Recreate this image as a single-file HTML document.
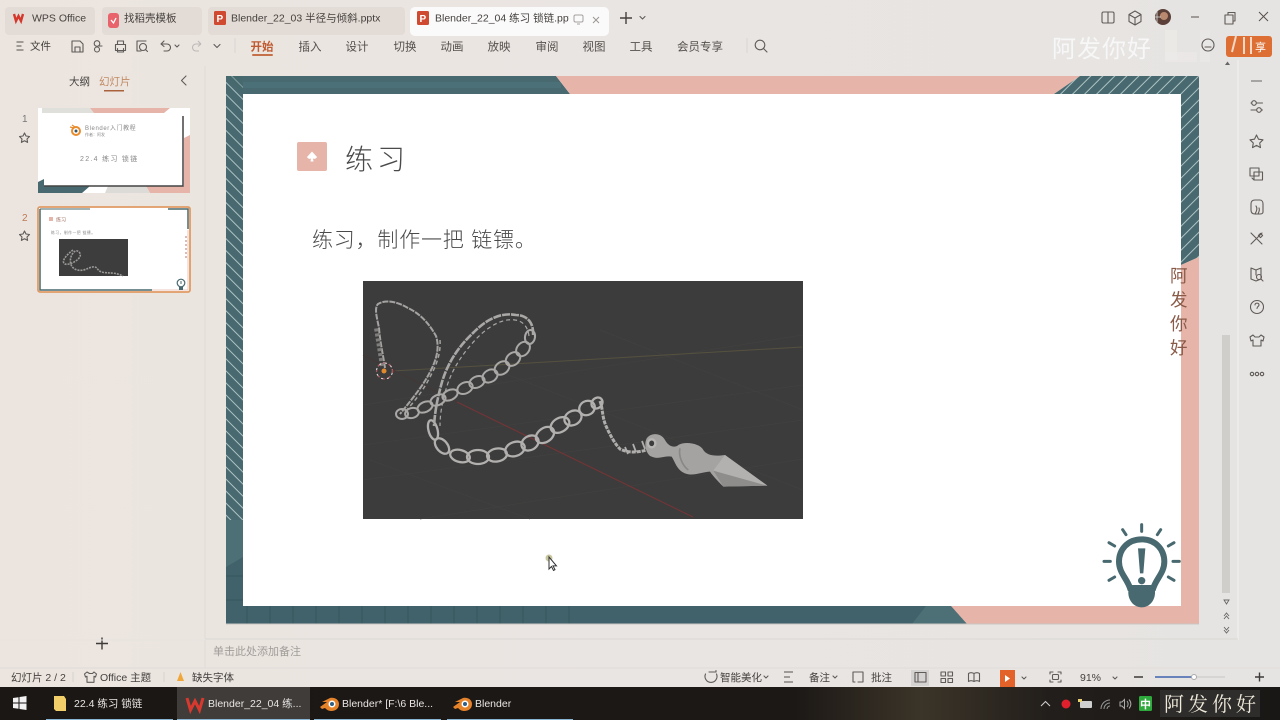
<!DOCTYPE html>
<html><head><meta charset="utf-8">
<style>
html,body{margin:0;padding:0;background:#e8e5e2;width:1280px;height:720px;overflow:hidden}
svg{display:block}
text{font-family:"Liberation Sans","Noto Sans CJK SC",sans-serif;fill:#45413e;font-size:11px}
.m{font-size:11.5px;text-anchor:middle;fill:#55504c}
.i{fill:none;stroke:#5f5b58;stroke-width:1.1;stroke-linecap:round;stroke-linejoin:round}
.t{font-size:10.5px;fill:#e8e6e4}
</style></head><body>
<svg width="1280" height="720" viewBox="0 0 1280 720" xmlns="http://www.w3.org/2000/svg">
<defs>
<linearGradient id="bg" x1="0" x2="1" y1="0" y2="0"><stop offset="0" stop-color="#ece5df"/><stop offset=".5" stop-color="#e9e5e2"/><stop offset="1" stop-color="#e6e4e2"/></linearGradient>
<pattern id="hl" width="8.500" height="8.500" patternUnits="userSpaceOnUse" patternTransform="rotate(45)"><rect width="9" height="9" fill="#47696f"/><rect width="9" height="1" fill="#aec3c4"/></pattern>
<pattern id="hr" width="8.500" height="8.500" patternUnits="userSpaceOnUse" patternTransform="rotate(-45)"><rect width="9" height="9" fill="#47696f"/><rect width="9" height="1" fill="#aec3c4"/></pattern>
<linearGradient id="tb" x1="0" x2="1" y1="0" y2="0"><stop offset="0" stop-color="#1b1715"/><stop offset=".62" stop-color="#1c1816"/><stop offset=".72" stop-color="#3b3428"/><stop offset=".82" stop-color="#221e1b"/><stop offset="1" stop-color="#191715"/></linearGradient>
</defs>
<rect width="1280" height="720" fill="url(#bg)"/>

<!-- tabs -->
<rect x="5" y="7" width="90" height="28" rx="4" fill="#e3dbd5"/>
<rect x="102" y="7" width="100" height="28" rx="4" fill="#e3dbd5"/>
<rect x="208" y="7" width="197" height="28" rx="4" fill="#e3dbd5"/>
<rect x="410" y="7" width="199" height="29" rx="5" fill="#fbfafa"/>
<path d="M14 14l2 7 2.500-5 2.500 5 2-7" fill="none" stroke="#d5372d" stroke-width="2.400"/>
<text x="32" y="21.500" style="font-size:10.500px">WPS Office</text>
<rect x="108" y="13" width="11" height="15" rx="3" fill="#e8636c"/><path d="M111 20l2.500 3 2.500-5" fill="none" stroke="#fff" stroke-width="1.300"/>
<text x="124" y="21.500" style="font-size:10.500px">找稻壳模板</text>
<rect x="214" y="11" width="12" height="14" rx="1.500" fill="#cf4a30"/><text x="216.500" y="22" style="font-size:10px;font-weight:bold;fill:#fff">P</text>
<text x="231" y="21.500" style="font-size:10.500px">Blender_22_03 半径与倾斜.pptx</text>
<rect x="417" y="11" width="12" height="14" rx="1.500" fill="#cf4a30"/><text x="419.500" y="22" style="font-size:10px;font-weight:bold;fill:#fff">P</text>
<text x="435" y="21.500" style="font-size:10.500px">Blender_22_04 练习 锁链.ppt</text>
<rect x="569" y="8" width="30" height="27" fill="#fbfafa"/>
<rect x="574" y="15" width="9" height="7" rx="1.500" fill="none" stroke="#a5a19f"/><path d="M577 24h3" stroke="#a5a19f"/>
<path d="M593 17l6 6m0-6l-6 6" stroke="#9a9694" stroke-width="1"/>
<path d="M620 18h12M626 12v12" stroke="#45403d" stroke-width="1.400"/>
<path d="M640 16.500l2.500 2.500 2.500-2.500" class="i"/>

<!-- window controls -->
<g class="i"><rect x="1102" y="12" width="12" height="11" rx="1.500"/><path d="M1108 12v11"/>
<path d="M1135 11l6 3.500v7l-6 3.500-6-3.500v-7zM1129 14.500l6 3.500 6-3.500M1135 18v7"/></g>
<circle cx="1163" cy="17" r="8" fill="#5a4038"/><circle cx="1164" cy="16" r="4" fill="#b98a70"/><path d="M1157 11v12M1154 17h7" stroke="#ddd" stroke-width=".8"/>
<path d="M1191 17h8" stroke="#55514e"/>
<g class="i"><rect x="1225" y="15" width="8" height="9"/><path d="M1228 15v-2.500h7v8.500h-2"/></g>
<path d="M1259 12l9 9m0-9l-9 9" stroke="#55514e" stroke-width="1"/>

<!-- toolbar -->
<path d="M16.500 42h7M16.500 46h5M16.500 50h7" stroke="#55514e"/>
<text x="30" y="49.500" style="font-size:10.500px">文件</text>
<g class="i"><path d="M72 41h8l3 3v8H72zM75 52v-5h5v5"/>
<circle cx="97" cy="43.500" r="2.800"/><circle cx="97" cy="49.500" r="2.500"/><path d="M99 46l3 0"/>
<rect x="115.500" y="44.500" width="10" height="6"/><path d="M117.500 44.500v-3.500h6v3.500M117.500 48.500v3.500h6v-3.500"/>
<path d="M146 41h-9v10h4"/><circle cx="143" cy="47" r="3.500"/><path d="M145.500 49.500l2 2"/>
<path d="M161 44l3-3M161 44l3 2.500M161 44h6a3.500 3.500 0 0 1 0 7h-3"/></g>
<path d="M175 45l2 2 2-2" class="i"/>
<path d="M201 44l-3-3M201 44l-3 2.500M201 44h-5a3.500 3.500 0 0 0 0 7h3" fill="none" stroke="#bdb9b6" stroke-width="1.100"/>
<path d="M214 44.500l3 3 3-3" class="i"/>
<path d="M235 38v15" stroke="#d9d5d2"/>
<text class="m" x="262" y="50.500" style="font-size:11.500px;fill:#c05a30;font-weight:bold">开始</text>
<rect x="252" y="54" width="21" height="2" rx="1" fill="#c6704a"/>
<text class="m" x="310" y="50.500">插入</text><text class="m" x="357" y="50.500">设计</text><text class="m" x="405" y="50.500">切换</text><text class="m" x="452" y="50.500">动画</text><text class="m" x="499" y="50.500">放映</text><text class="m" x="547" y="50.500">审阅</text><text class="m" x="594" y="50.500">视图</text><text class="m" x="641" y="50.500">工具</text><text class="m" x="700" y="50.500">会员专享</text>
<path d="M747 38v15" stroke="#d9d5d2"/>
<g class="i"><circle cx="760" cy="45" r="4.800"/><path d="M763.500 48.500l3.500 3.500"/></g>

<!-- watermark top right -->
<rect x="1165" y="30" width="12" height="30" fill="#f1efee" opacity=".4"/><rect x="1165" y="52" width="32" height="10" fill="#f1efee" opacity=".3"/><rect x="1200" y="30" width="10" height="32" fill="#f1efee" opacity=".3"/>
<text x="1052" y="57" style="font-size:24px;fill:#fafafa;letter-spacing:1px;opacity:.88">阿发你好</text>
<circle cx="1208" cy="45" r="6" class="i"/><path d="M1205 47h6" class="i"/>
<rect x="1226" y="36" width="46" height="21" rx="3" fill="#dd6f35"/>
<path d="M1236 36l-4 16M1244 37v17M1251 37v17" stroke="#f5d8c5" stroke-width="2"/>
<text x="1255" y="51" style="font-size:11px;fill:#fff">享</text>

<!-- left panel -->
<text x="69" y="85" style="font-size:10.500px">大纲</text>
<text x="99" y="85" style="font-size:10.500px;fill:#c28a64">幻灯片</text>
<rect x="104" y="90" width="20" height="1.500" fill="#a9623c"/>
<path d="M186 76l-4.500 4.500 4.500 4.500" class="i"/>
<path d="M205 66v573" stroke="#e0dcd8"/>
<text x="22" y="122" style="font-size:10px;fill:#777">1</text>
<path d="M24.500 133l1.500 3 3.500.5-2.500 2.500.6 3.400-3.100-1.600-3.100 1.600.6-3.400-2.500-2.500 3.500-.5z" class="i"/>
<text x="22" y="221" style="font-size:10px;fill:#bd7a52">2</text>
<path d="M24.500 231l1.500 3 3.500.5-2.500 2.500.6 3.400-3.100-1.600-3.100 1.600.6-3.400-2.500-2.500 3.500-.5z" class="i"/>

<!-- thumb 1 -->
<rect x="38" y="108" width="152" height="85" fill="#fff"/>
<path d="M42 108h48l4 5H42z" fill="#dfdfdc"/><path d="M90 108h80l-6 5H94z" fill="#e6b4a9"/>
<path d="M184 138l6-3v58h-40l-4-7h38z" fill="#e6b4a9"/>
<path d="M38 182l6-3v7h46l-8 7H38z" fill="#47696f"/>
<path d="M105 193l3-7h38l4 7z" fill="#dddbd8"/>
<path d="M183 116v70H44" fill="none" stroke="#444" stroke-width="1.500"/>
<circle cx="76" cy="131" r="4" fill="none" stroke="#e88c2e" stroke-width="2"/><circle cx="76" cy="131" r="1.500" fill="#37586a"/><path d="M70 127l4 1M72 125l3 2" stroke="#e88c2e" stroke-width="1.200"/>
<text x="85" y="130" style="font-size:6px;fill:#888;letter-spacing:.6px">Blender入门教程</text>
<text x="85" y="136" style="font-size:4px;fill:#888">作者：阿发</text>
<text x="80" y="161" style="font-size:7px;fill:#888;letter-spacing:1.300px">22.4 练习 锁链</text>

<!-- thumb 2 -->
<rect x="38" y="207" width="152" height="85" rx="2" fill="#fff" stroke="#e09a63" stroke-width="1.800"/>
<path d="M40 209v81h112" fill="none" stroke="#47696f" stroke-width="1.500"/>
<path d="M40 209h50" stroke="#47696f" stroke-width="1"/><path d="M168 209h20v20" fill="none" stroke="#47696f" stroke-width="1.500"/>
<path d="M152 290h36v-60" fill="none" stroke="#e8c7bd" stroke-width="1"/>
<rect x="49" y="217" width="4" height="4" fill="#e6b4a9"/>
<text x="56" y="221.500" style="font-size:5px;fill:#a07060">练习</text>
<text x="51" y="234" style="font-size:3.800px;fill:#888;letter-spacing:.5px">练习，制作一把 链镖。</text>
<rect x="59" y="239" width="69" height="37" fill="#3d3d3d"/>
<path d="M73 250c-8 6-12 12-8 14s20-6 14-12-15 14-2 18c10 2 14-6 20-2 4 8 14 2 26 8" fill="none" stroke="#9c9a98" stroke-width="1.600" stroke-dasharray="2 1"/>
<path d="M186 236v24" stroke="#cba79c" stroke-width="1.500" stroke-dasharray="2 2"/>
<circle cx="181" cy="283" r="3.800" fill="none" stroke="#47696f" stroke-width="1.200"/><rect x="179" y="287" width="4" height="3" fill="#47696f"/><path d="M181 281v3" stroke="#47696f"/>
<path d="M96 643.500h12M102 637.500v12" stroke="#3d3a38" stroke-width="1.400"/>

<!-- slide -->
<rect x="226" y="76" width="973" height="548" fill="#fff"/>
<path d="M226 76h330l14 18H243v512h708l16 18H226z" fill="#47696f"/>
<rect x="243" y="82" width="318" height="6" fill="#4f747a" opacity=".7"/>
<path d="M556 76h524l-26 18H570z" fill="#e6b4a9"/>
<path d="M1080 76h119v181l-18 8V94h-127z" fill="url(#hr)"/>
<path d="M1199 257v367H967l-16-18h230V265z" fill="#e6b4a9"/>
<rect x="226" y="76" width="17" height="444" fill="url(#hl)"/>
<path d="M226 76h17v18z" fill="#47696f" opacity=".4"/>
<rect x="226" y="520" width="17" height="104" fill="#4d7076"/>
<path d="M226 567l17-10v67h-17z" fill="#41626a"/>
<path d="M226 606h700v18H226z" fill="#41626a"/>
<path d="M926 606h25l16 18h-55z" fill="#4d7076"/>
<path d="M247 606v18M270 606v18M293 606v18M316 606v18M339 606v18M362 606v18M385 606v18M408 606v18M431 606v18M454 606v18M477 606v18M500 606v18M523 606v18M546 606v18M569 606v18M226 576h17M226 600h17" stroke="#365359" stroke-width=".8"/>
<path d="M226 624h973" stroke="#c9c6c3" stroke-width="1"/>

<rect x="297" y="142" width="30" height="29" rx="2" fill="#e6b4a9"/>
<path d="M307 157l5-5.500 5 5.500a3 3 0 0 1-4 1.500l.5 3h-3l.5-3a3 3 0 0 1-4-1.500z" fill="#fff"/>
<text x="345" y="169" style="font-size:28px;fill:#4a4a4a;font-weight:300;letter-spacing:4px">练习</text>
<text x="312" y="247" style="font-size:21px;fill:#4a4a4a;font-weight:300;letter-spacing:.8px">练习，制作一把 链镖。</text>

<!-- picture -->
<rect x="363" y="281" width="440" height="238" fill="#3c3c3c"/>
<g stroke="#424140" stroke-width=".7" fill="none"><path d="M363 445l440-60M363 480l440-60M420 519l383-60M363 405l440-70M370 460l160 59M470 360l333 130M600 330l203 80"/></g>
<path d="M393 371L802 347" stroke="#56513f" stroke-width="1"/>
<path d="M363 355l94 47" stroke="#443838" stroke-width="1"/>
<path d="M457 402L693 517" stroke="#743436" stroke-width="1.100"/>
<g fill="none" stroke="#b2b0ae" stroke-width="2.300">
<ellipse cx="433" cy="430" rx="10" ry="4.500" transform="rotate(75 433 430)"/>
<ellipse cx="442" cy="446" rx="9" ry="5.500" transform="rotate(50 442 446)"/>
<ellipse cx="460" cy="456" rx="10" ry="6" transform="rotate(15 460 456)"/>
<ellipse cx="478" cy="457" rx="11" ry="7"/>
<ellipse cx="497" cy="455" rx="10" ry="6.500" transform="rotate(-10 497 455)"/>
<ellipse cx="515" cy="449" rx="10" ry="7" transform="rotate(-20 515 449)"/>
<ellipse cx="530" cy="443" rx="9" ry="7" transform="rotate(-30 530 443)"/>
<ellipse cx="545" cy="435" rx="10" ry="7" transform="rotate(-35 545 435)"/>
<ellipse cx="560" cy="425" rx="10" ry="7" transform="rotate(-30 560 425)"/>
<ellipse cx="573" cy="418" rx="9" ry="7" transform="rotate(-30 573 418)"/>
<ellipse cx="587" cy="408" rx="8" ry="7" transform="rotate(-30 587 408)"/>
<ellipse cx="597" cy="403" rx="6" ry="5" transform="rotate(-45 597 403)"/>
</g>
<g fill="none" stroke="#aaa8a6" stroke-width="2">
<ellipse cx="402" cy="414" rx="6" ry="5"/>
<ellipse cx="412" cy="413" rx="7" ry="5" transform="rotate(-15 412 413)"/>
<ellipse cx="425" cy="407" rx="8" ry="5" transform="rotate(-25 425 407)"/>
<ellipse cx="438" cy="400" rx="8" ry="5" transform="rotate(-25 438 400)"/>
<ellipse cx="450" cy="395" rx="8" ry="5" transform="rotate(-25 450 395)"/>
<ellipse cx="465" cy="388" rx="8" ry="5.500" transform="rotate(-25 465 388)"/>
<ellipse cx="477" cy="382" rx="8" ry="5.500" transform="rotate(-25 477 382)"/>
<ellipse cx="490" cy="376" rx="8" ry="6" transform="rotate(-30 490 376)"/>
<ellipse cx="502" cy="368" rx="8" ry="6" transform="rotate(-35 502 368)"/>
<ellipse cx="513" cy="359" rx="8" ry="6" transform="rotate(-40 513 359)"/>
<ellipse cx="523" cy="349" rx="8" ry="6" transform="rotate(-50 523 349)"/>
<ellipse cx="530" cy="337" rx="7" ry="5" transform="rotate(-80 530 337)"/>
<path d="M533 335c1-12-6-20-17-20-16-3-30 5-42 17-15 14-26 30-32 50-4 14-7 28-8 44" stroke-width="2.600" stroke-dasharray="8 1"/>
<path d="M529 336c-1-9-6-15-14-16-13-2-27 7-38 18-13 14-24 29-30 48-4 13-7 26-7 40" stroke-width="1.200" stroke-dasharray="4 3"/>
</g>
<g fill="none" stroke="#a5a3a1" stroke-width="2">
<path d="M385 368c-2-14-5-26-6-40-2-10-5-20-1-24 8-5 20-2 30 4 13 6 22 17 28 28 4 12 0 25-6 36-7 14-18 27-30 42" stroke-dasharray="6 1"/>
<path d="M382 366c-2-13-4-25-6-38" stroke="#807e7c" stroke-width="4" stroke-dasharray="3 2"/>
<path d="M440 340c1 14-4 26-10 37-7 14-16 25-26 36" stroke-width="1.500" stroke-dasharray="4 3"/>
</g>
<circle cx="384.500" cy="371" r="8" fill="none" stroke="#e6dcdc" stroke-width="1.100" stroke-dasharray="4 2"/>
<circle cx="384.500" cy="371" r="8" fill="none" stroke="#b04a55" stroke-width="1.100" stroke-dasharray="2 4"/>
<circle cx="384" cy="371" r="2.500" fill="#e08a2e"/>
<path d="M600 401c3 8 2 16 6 25 4 9 9 18 14 23 8 4 18 4 30 0" fill="none" stroke="#b0aeac" stroke-width="3" stroke-dasharray="4 1"/>
<path d="M625 447l3 7M633 444l3 8M642 441l3 8" stroke="#b0aeac" stroke-width="1.800"/>
<g transform="translate(360 280) scale(.33333)">
<path d="M860 475C875 455 905 460 915 480C925 500 945 505 955 495C975 483 1020 490 1030 510C1040 525 1060 530 1095 525L1222 617L1090 620C1080 610 1060 590 1050 575C1030 575 1000 590 975 580C950 570 945 545 935 530C915 525 895 540 875 530C860 525 850 495 860 475Z" fill="#a5a3a2"/>
<path d="M1060 572L1222 617L1090 620Z" fill="#8f8d8c"/>
<path d="M1095 525L1222 617L1060 572Z" fill="#b3b1b0"/>
<ellipse cx="875" cy="490" rx="11" ry="12" fill="#3c3c3c" stroke="#b8b6b4" stroke-width="7"/>
<path d="M960 505c-5 20 5 50 25 65" fill="none" stroke="#8a8887" stroke-width="5"/>
</g>

<!-- vertical text -->
<text x="1170" y="282" style="font-size:17.500px;fill:#8a5a48">阿</text><text x="1170" y="306" style="font-size:17.500px;fill:#8a5a48">发</text><text x="1170" y="330" style="font-size:17.500px;fill:#8a5a48">你</text><text x="1170" y="354" style="font-size:17.500px;fill:#8a5a48">好</text>

<!-- lightbulb -->
<g transform="translate(1090 500) scale(.3333)">
<path d="M155 118C112 118 87 150 87 185C87 218 110 234 120 264H190C200 234 223 218 223 185C223 150 198 118 155 118Z" fill="#fff" stroke="#47696f" stroke-width="18"/>
<path d="M116 266h78c6 30-13 56-39 56s-45-26-39-56z" fill="#47696f"/>
<path d="M144 145h22l-6 75h-10z" fill="#47696f"/><circle cx="155" cy="242" r="11" fill="#47696f"/>
<path d="M155 74v20M98 89l10 15M212 89l-10 15M57 128l17 10M252 128l-17 10M42 184h19M268 184h-19M57 241l17-10M252 241l-17-10" stroke="#47696f" stroke-width="9" stroke-linecap="round"/>
</g>

<!-- cursor -->
<circle cx="549" cy="558" r="3.500" fill="#c9c79f"/>
<path d="M549 557v12l2.500-2.500 2 4 1.500-.8-2-3.800h3.500z" fill="#fff" stroke="#333" stroke-width="1"/>

<!-- right scroll + panel -->
<rect x="1222" y="335" width="8" height="258" fill="#d0cecb"/>
<path d="M1225 65l2.500-3.500 2.500 3.500z" fill="#666"/>
<path d="M1224 600h5l-2.500 4zM1224 616l2.500-3 2.500 3M1224 619l2.500-3 2.500 3M1224 627l2.500 3 2.500-3M1224 630l2.500 3 2.500-3" fill="none" stroke="#666" stroke-width=".9"/>
<path d="M1238 60v580" stroke="#efedeb" stroke-width="1.500"/>
<path d="M1251 81h11" stroke="#666"/>
<g class="i">
<circle cx="1254" cy="103" r="2.300"/><path d="M1256.500 103h6M1251 103h.8"/><circle cx="1259" cy="110" r="2.300"/><path d="M1251 110h5.500M1261.500 110h1"/>
<path d="M1256.500 135l2 4.200 4.500.6-3.300 3.200.8 4.600-4-2.200-4 2.200.8-4.600-3.300-3.200 4.500-.6z"/>
<rect x="1250" y="168" width="9" height="8"/><path d="M1254 172h8.500v8h-8.500zM1252 178l2 2"/>
<path d="M1251 210v-6c0-3 2-4 4-4h5c2 0 3 2 3 4v8c0 1-1 2-3 2h-5c-2 0-4-1-4-4zM1256 206c2 3 0 6-1 8M1259 208c1 2 0 4-1 6"/>
<path d="M1251 233l11 11M1262 233l-11 11"/><rect x="1259" y="234" width="3" height="3" transform="rotate(45 1260.500 235.500)"/>
<path d="M1251 268l5 2 5-2v11l-5 2-5-2zM1256 270v5"/><circle cx="1259" cy="277" r="2.500"/><path d="M1261 279l2 2"/>
<circle cx="1257" cy="307" r="6.500"/>
<path d="M1255 305c0-2.500 4-2.500 4 0 0 1.500-2 1.500-2 3.500"/>
<path d="M1253 335l-3 2 1 4 2-1v6h8v-6l2 1 1-4-3-2-2 2h-4z"/>
<circle cx="1252" cy="374" r="1.700"/><circle cx="1257" cy="374" r="1.700"/><circle cx="1262" cy="374" r="1.700"/>
</g>

<!-- notes -->
<path d="M205 639H1238" stroke="#dad7d4"/>
<path d="M0 640h205" stroke="#e6e2df"/>
<text x="213" y="655" style="font-size:11px;fill:#a09c97">单击此处添加备注</text>
<path d="M205 640v28" stroke="#e0dcd8"/>
<path d="M0 668h1280" stroke="#e0dcd9"/>

<!-- status bar -->
<text x="11" y="681" style="font-size:10.500px">幻灯片 2 / 2</text>
<path d="M73 672v10" stroke="#d8d4d1"/>
<path d="M87 672l-2.500 2 1 3 1.500-.7v6h7v-6l1.500.7 1-3-2.500-2-1.500 1.500h-3z" class="i"/>
<text x="100" y="681" style="font-size:10.500px">Office 主题</text>
<path d="M164 672v10" stroke="#d8d4d1"/>
<path d="M180.500 672l3.500 9h-7z" fill="#f0a73a"/>
<text x="192" y="681" style="font-size:10.500px">缺失字体</text>
<g class="i"><path d="M709 672h7v-1.500M705.500 674a6 6 0 1 0 11 0"/></g>
<text x="720" y="681" style="font-size:10.500px">智能美化</text><path d="M764 676l2 2 2-2" class="i"/>
<path d="M784 672h9M784 677h6M784 682h9" stroke="#55514e"/>
<text x="809" y="681" style="font-size:10.500px">备注</text><path d="M833 676l2 2 2-2" class="i"/>
<path d="M855 682h-2v-10h10v10h-5" class="i"/>
<text x="871" y="681" style="font-size:10.500px">批注</text>
<rect x="911" y="670" width="18" height="16" fill="#d5d3d1"/>
<g class="i"><rect x="915" y="672.500" width="11" height="9.500"/><path d="M918 672.500v9.500"/>
<rect x="941" y="672" width="4.500" height="4"/><rect x="948" y="672" width="4.500" height="4"/><rect x="941" y="678.500" width="4.500" height="4"/><rect x="948" y="678.500" width="4.500" height="4"/>
<path d="M974 673.500c-2-1-4-1-5.500 0v8c1.500-1 3.500-1 5.500 0 2-1 4-1 5.500 0v-8c-1.500-1-3.500-1-5.500 0zM974 673.500v8"/></g>
<rect x="1000" y="670" width="15" height="17" fill="#e2622a"/><path d="M1005 675l5 3.500-5 3.500z" fill="#fff"/>
<path d="M1022 677l2 2 2-2" class="i"/>
<g class="i"><path d="M1050 674v-2h3M1058 672h3v2M1061 680v2h-3M1053 682h-3v-2"/><rect x="1052.500" y="674.500" width="6" height="5" rx="1"/></g>
<text x="1080" y="681" style="font-size:10.500px">91%</text><path d="M1113 677l2 2 2-2" class="i"/>
<path d="M1134 677h9" stroke="#3d3a38" stroke-width="1.500"/>
<path d="M1155 677h38" stroke="#3f62b0" stroke-width="1.500"/><path d="M1193 677h32" stroke="#c8c6c4"/>
<circle cx="1194" cy="677" r="2.500" fill="#fff" stroke="#aaa"/>
<path d="M1255 677h9M1259.500 672.500v9" stroke="#3d3a38" stroke-width="1.400"/>

<!-- taskbar -->
<rect x="0" y="687" width="1280" height="33" fill="url(#tb)"/>
<rect x="177" y="687" width="133" height="33" fill="#3f3c3a"/>
<path d="M46 719.500h127M177 719.500h133M314 719.500h127M447 719.500h126" stroke="#8ab6d6" stroke-width="1"/>
<path d="M13 698l5.500-.8v5.300H13zM19.500 697l7-1v6.500h-7zM13 703.500h5.500v5.300L13 708zM19.500 703.500h7v6.500l-7-1z" fill="#f2f2f2"/>
<path d="M54 696h10l2 3v12H56l-2-2z" fill="#f3cf6a"/>
<text x="74" y="707" class="t">22.4 练习 锁链</text>
<path d="M187 698l3.500 12 4.500-9 4.500 9 3.500-12" fill="none" stroke="#d8392f" stroke-width="3"/>
<text x="208" y="707" class="t">Blender_22_04 练...</text>
<path d="M320 707l7-5-5 0 8-4c5-1 9 2 9 6 0 5-4 7-8 7-3 0-5-2-6-3l-3 1z" fill="#e5832b"/><circle cx="332" cy="704" r="3.500" fill="#fff"/><circle cx="332" cy="704" r="2" fill="#2e5f86"/>
<text x="342" y="707" class="t">Blender* [F:\6 Ble...</text>
<path d="M453 707l7-5-5 0 8-4c5-1 9 2 9 6 0 5-4 7-8 7-3 0-5-2-6-3l-3 1z" fill="#e5832b"/><circle cx="465" cy="704" r="3.500" fill="#fff"/><circle cx="465" cy="704" r="2" fill="#2e5f86"/>
<text x="475" y="707" class="t">Blender</text>
<path d="M1041 706l4.500-4.500 4.500 4.500" fill="none" stroke="#ccc" stroke-width="1.100"/>
<circle cx="1066" cy="704" r="4.500" fill="#e0202c"/>
<rect x="1080" y="701" width="12" height="7" rx="1" fill="#cfcfcf"/><rect x="1078" y="699" width="4" height="3" fill="#e8d070"/>
<path d="M1101 709a9 9 0 0 1 9-9M1104 709a6 6 0 0 1 6-6M1107 709a3 3 0 0 1 3-3" fill="none" stroke="#999"/>
<path d="M1120 702h2l2.500-2.500v9l-2.500-2.500h-2z" fill="none" stroke="#aaa"/><path d="M1127 701c1.500 2 1.500 4 0 6M1129 699.500c2.500 3 2.500 6 0 9" fill="none" stroke="#aaa"/>
<rect x="1139" y="696" width="13" height="15" rx="1.500" fill="#2eaa3c"/><text x="1140" y="708" style="font-size:11px;fill:#fff;font-weight:bold">中</text>
<rect x="1160" y="690" width="100" height="27" fill="#2e2d2b"/>
<text x="1164" y="711" style="font-family:'Noto Serif CJK SC','Liberation Serif',serif;font-size:20px;fill:#efeadb;letter-spacing:4px">阿发你好</text>
</svg>
</body></html>
